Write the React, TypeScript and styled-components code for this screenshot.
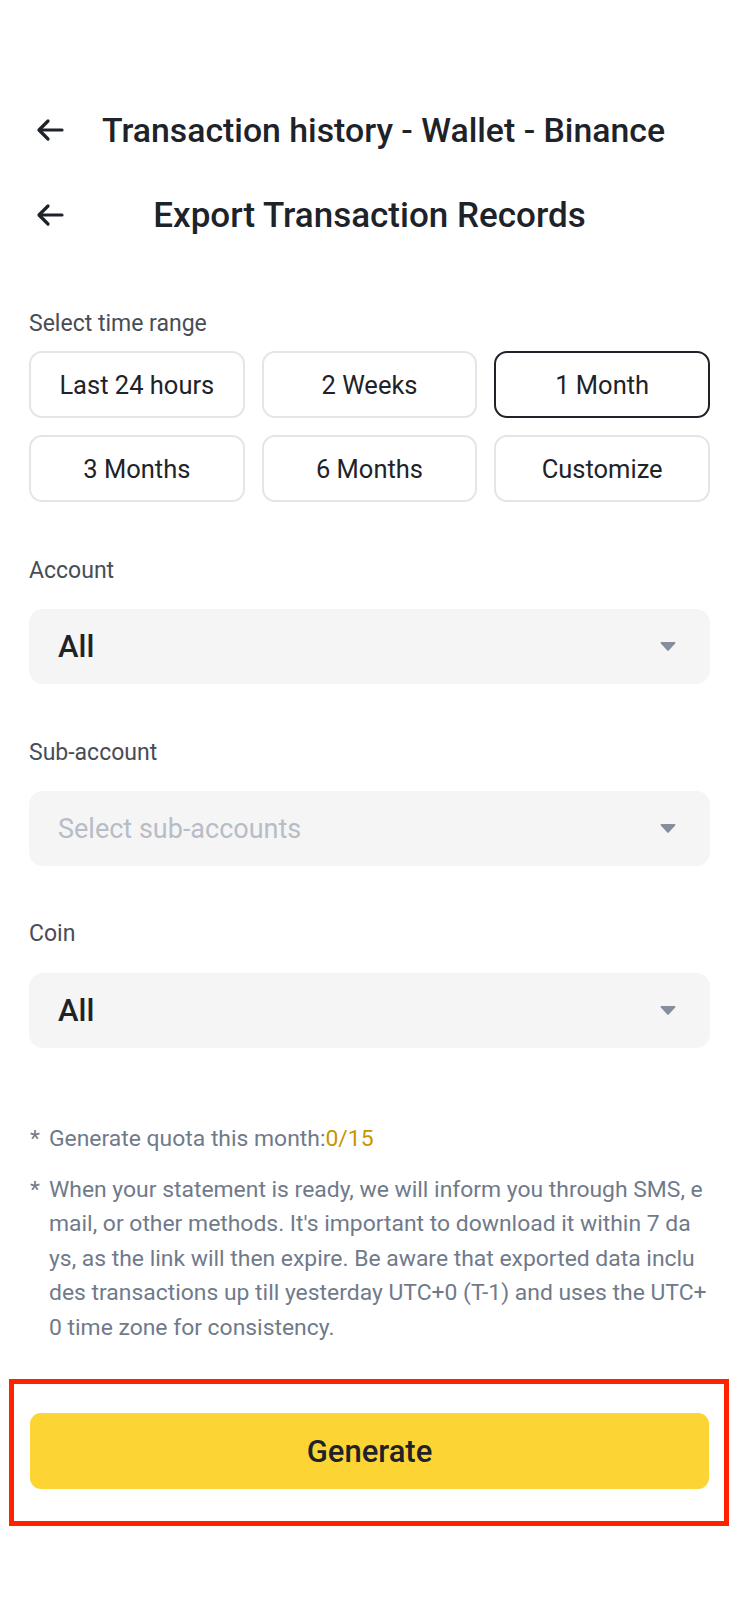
import React, { useState } from "react";
import styled, { createGlobalStyle } from "styled-components";

const Global = createGlobalStyle`
  html, body { margin: 0; padding: 0; background: #ffffff; }
  body { font-family: Roboto, "Noto Sans", "Liberation Sans", sans-serif; color: #1e2329; }
  * { box-sizing: border-box; }
`;

const Page = styled.div`
  width: 739px;
  min-height: 1600px;
  background: #fff;
  display: flex;
  flex-direction: column;
  padding-top: 108px;
`;

const TopBar = styled.div`
  height: 44px;
  display: flex;
  align-items: center;
  padding-left: 36px;
  gap: 38px;
`;

const TopTitle = styled.div`
  font-size: 33.8px;
  font-weight: 500;
  color: #1e2329;
`;

const SubBar = styled.div`
  height: 44px;
  margin-top: 41px;
  position: relative;
  display: flex;
  align-items: center;
  justify-content: center;
`;

const BackButton = styled.div`
  position: absolute;
  left: 36px;
  top: 8px;
  width: 28px;
  height: 28px;
  display: flex;
  align-items: center;
  justify-content: center;
`;

const SubTitle = styled.div`
  font-size: 35px;
  font-weight: 500;
  color: #1e2329;
`;

const Body = styled.div`
  padding: 0 29px;
  display: flex;
  flex-direction: column;
`;

const Label = styled.div<{ $top: number }>`
  margin-top: ${(p) => p.$top}px;
  font-size: 23px;
  line-height: 28px;
  color: #474d57;
`;

const ChipGrid = styled.div`
  margin-top: 13px;
  display: grid;
  grid-template-columns: repeat(3, 1fr);
  column-gap: 17px;
  row-gap: 17px;
`;

const Chip = styled.button<{ $active: boolean }>`
  height: 67px;
  border-radius: 13px;
  border: 2px solid ${(p) => (p.$active ? "#1e2329" : "#e3e5e8")};
  background: #fff;
  font-family: inherit;
  font-size: 25.5px;
  color: #1e2329;
  display: flex;
  align-items: center;
  justify-content: center;
  padding: 0;
  cursor: pointer;
`;

const SelectBox = styled.div<{ $top: number }>`
  margin-top: ${(p) => p.$top}px;
  height: 75px;
  border-radius: 14px;
  background: #f5f5f5;
  display: flex;
  align-items: center;
  justify-content: space-between;
  padding: 0 34px 0 29px;
`;

const SelectText = styled.div<{ $placeholder?: boolean }>`
  font-size: ${(p) => (p.$placeholder ? "27px" : "31px")};
  font-weight: ${(p) => (p.$placeholder ? 400 : 500)};
  color: ${(p) => (p.$placeholder ? "#b7bdc6" : "#1e2329")};
`;

const Notes = styled.div`
  margin-top: 74px;
  display: flex;
  flex-direction: column;
  gap: 16px;
`;

const Note = styled.div`
  display: grid;
  grid-template-columns: 20px 1fr;
  font-size: 22.9px;
  line-height: 34.5px;
  color: #707a8a;
`;

const Star = styled.span`
  padding-left: 1px;
`;

const NoteLines = styled.div`
  display: flex;
  flex-direction: column;
`;

const Line = styled.span`
  white-space: nowrap;
`;

const Quota = styled.span`
  color: #c99400;
`;

const Highlight = styled.div`
  margin: 34px 10px 0 9px;
  border: 5px solid #ff2200;
  padding: 29px 15px 32px 16px;
`;

const GenerateButton = styled.button`
  width: 100%;
  height: 76px;
  border: none;
  border-radius: 11px;
  background: #fcd535;
  font-family: inherit;
  font-size: 31px;
  font-weight: 500;
  color: #1e2329;
  cursor: pointer;
`;

const Arrow = () => (
  <svg width="28" height="24" viewBox="0 0 28 24" fill="none">
    <path d="M26 12H3.5" stroke="#1e2329" strokeWidth="3.2" strokeLinecap="round" />
    <path d="M12 3L3 12L12 21" stroke="#1e2329" strokeWidth="3.2" strokeLinecap="round" strokeLinejoin="round" />
  </svg>
);

const Caret = () => (
  <svg width="16" height="11" viewBox="0 0 16 11">
    <path d="M1.5 1h13c.8 0 1.2.9.7 1.5L8.7 9.6c-.4.5-1 .5-1.4 0L.8 2.5C.3 1.9.7 1 1.5 1z" fill="#848e9c" />
  </svg>
);

const ranges = ["Last 24 hours", "2 Weeks", "1 Month", "3 Months", "6 Months", "Customize"];

export default function App() {
  const [range, setRange] = useState("1 Month");
  return (
    <Page>
      <Global />
      <TopBar>
        <Arrow />
        <TopTitle>Transaction history - Wallet - Binance</TopTitle>
      </TopBar>
      <SubBar>
        <BackButton>
          <Arrow />
        </BackButton>
        <SubTitle>Export Transaction Records</SubTitle>
      </SubBar>
      <Body>
        <Label $top={73}>Select time range</Label>
        <ChipGrid>
          {ranges.map((r) => (
            <Chip key={r} $active={r === range} onClick={() => setRange(r)}>
              {r}
            </Chip>
          ))}
        </ChipGrid>
        <Label $top={55}>Account</Label>
        <SelectBox $top={24}>
          <SelectText>All</SelectText>
          <Caret />
        </SelectBox>
        <Label $top={55}>Sub-account</Label>
        <SelectBox $top={24}>
          <SelectText $placeholder>Select sub-accounts</SelectText>
          <Caret />
        </SelectBox>
        <Label $top={54}>Coin</Label>
        <SelectBox $top={25}>
          <SelectText>All</SelectText>
          <Caret />
        </SelectBox>
        <Notes>
          <Note>
            <Star>*</Star>
            <NoteLines>
              <Line>
                Generate quota this month:<Quota>0/15</Quota>
              </Line>
            </NoteLines>
          </Note>
          <Note>
            <Star>*</Star>
            <NoteLines>
              <Line>When your statement is ready, we will inform you through SMS, e</Line>
              <Line>mail, or other methods. It's important to download it within 7 da</Line>
              <Line>ys, as the link will then expire. Be aware that exported data inclu</Line>
              <Line>des transactions up till yesterday UTC+0 (T-1) and uses the UTC+</Line>
              <Line>0 time zone for consistency.</Line>
            </NoteLines>
          </Note>
        </Notes>
      </Body>
      <Highlight>
        <GenerateButton>Generate</GenerateButton>
      </Highlight>
    </Page>
  );
}
